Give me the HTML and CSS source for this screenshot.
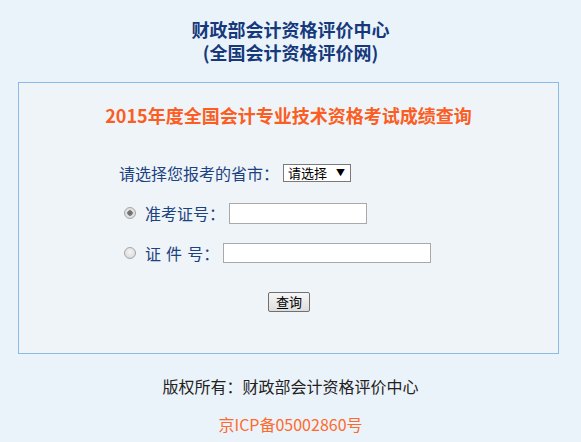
FILE: index.html
```html
<!DOCTYPE html>
<html lang="zh-CN">
<head>
    <meta charset="UTF-8">
    <meta name="viewport" content="width=device-width, initial-scale=1.0">
    <title>全国会计专业技术资格考试成绩查询</title>
    <link rel="stylesheet" href="styles.css">
</head>
<body>
    <h1 class="header">财政部会计资格评价中心<br>(全国会计资格评价网)</h1>

    <div class="panel">
        <h2 class="panel-title">2015年度全国会计专业技术资格考试成绩查询</h2>

        <div class="form">
            <div class="row">
                <label for="province">请选择您报考的省市：</label>
                <span class="select-wrap">
                    <select id="province">
                        <option>请选择</option>
                        <option>北京</option>
                        <option>上海</option>
                    </select>
                </span>
            </div>

            <div class="row row-radio">
                <input type="radio" name="type" id="type1" checked>
                <label for="type1">准考证号：</label>
                <input type="text" class="field field-short" id="zkzh">
            </div>

            <div class="row row-radio">
                <input type="radio" name="type" id="type2">
                <label for="type2" class="spaced">证 件 号：</label>
                <input type="text" class="field field-long" id="zjh">
            </div>

            <div class="actions">
                <button type="button">查询</button>
            </div>
        </div>
    </div>

    <div class="footer">
        <div>版权所有：财政部会计资格评价中心</div>
        <div class="icp">京ICP备05002860号</div>
    </div>
</body>
</html>
```

FILE: styles.css
```css
body {
    margin: 0;
    background: #ebf3fa;
    font-family: "Noto Sans CJK SC", "Noto Sans", sans-serif;
}

.header {
    margin: 18px 0 0;
    text-align: center;
    font-size: 18px;
    font-weight: bold;
    line-height: 23px;
    color: #15397a;
}

.panel {
    width: 539px;
    margin: 18px 0 0 18px;
    padding: 20px 0 41px;
    border: 1px solid #8dbbe7;
    background: #eef4f8;
}

.panel-title {
    margin: 0;
    text-align: center;
    font-size: 18px;
    line-height: 24px;
    color: #fb5d23;
}

.form {
    margin-top: 34px;
    padding-left: 100px;
}

.row {
    display: flex;
    align-items: center;
    gap: 4px;
    height: 24px;
    margin-bottom: 16px;
    font-size: 16px;
    line-height: 24px;
    color: #1d4282;
}

.row-radio {
    padding-left: 5px;
}

.row-radio input[type="radio"] {
    margin: 0 5px 0 0;
}

.spaced {
    word-spacing: 1.5px;
}

/* grey classic radio */
input[type="radio"] {
    appearance: none;
    flex: none;
    width: 12px;
    height: 12px;
    border: 1px solid #a6a6a6;
    border-radius: 50%;
    background: radial-gradient(circle at 50% 40%, #f4f4f4, #d4d4d4);
    box-sizing: border-box;
}

input[type="radio"]:checked {
    background: radial-gradient(circle, #6a6a6a 0, #7c7c7c 2.5px, #e2e2e2 3px, #dcdcdc 100%);
}

.select-wrap {
    position: relative;
    display: flex;
    height: 18px;
}

.select-wrap select {
    appearance: none;
    width: 68px;
    height: 18px;
    margin: 0;
    padding: 0 0 0 4px;
    border: 1px solid #7a7a7a;
    border-radius: 0;
    background: #fff;
    font-family: inherit;
    font-size: 13px;
    line-height: 16px;
    color: #000;
}

.select-wrap::after {
    content: "▼";
    position: absolute;
    right: 6px;
    top: 3px;
    font-size: 9px;
    line-height: 12px;
    color: #000;
    pointer-events: none;
}

.field {
    box-sizing: border-box;
    margin: 0;
    border: 1px solid #a9a9a9;
    background: #fff;
    padding: 0 3px;
}

.field-short {
    width: 138px;
    height: 21px;
}

.field-long {
    width: 208px;
    height: 20px;
}

.actions {
    display: flex;
    padding: 11px 0 0 149px;
}

button {
    width: 42px;
    height: 20px;
    padding: 0;
    border: 1px solid #707070;
    border-radius: 2px;
    background: linear-gradient(#f6f6f6, #dddddd);
    font-family: inherit;
    font-size: 13px;
    line-height: 18px;
    color: #000;
}

.footer {
    margin-top: 20px;
    text-align: center;
    font-size: 16px;
    line-height: 24px;
    color: #222;
}

.icp {
    margin-top: 14px;
    color: #ff6a2c;
}
```
